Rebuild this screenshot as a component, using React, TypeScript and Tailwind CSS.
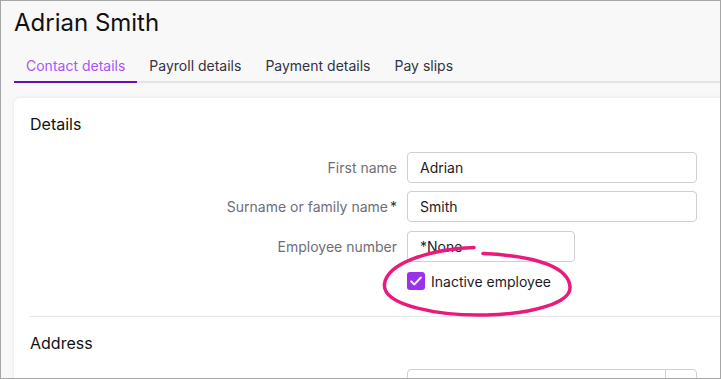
import React from "react";

const font = { fontFamily: "Inter, 'Noto Sans', sans-serif" };

function Row({ label, value, req, narrow }: { label: string; value: string; req?: boolean; narrow?: boolean }) {
  return (
    <div className="flex items-center h-[31px]">
      <div className="w-[368px] text-right text-[14px] text-[#6e6e78] pr-[1px]">
        {label}
        {req && <span className="ml-[2px] text-[#333]">*</span>}
      </div>
      <div
        className={`ml-[9px] h-[31px] ${narrow ? "w-[168px]" : "w-[290px]"} border border-[#cfcfd4] rounded-[4px] bg-white flex items-center px-[12px] text-[14px] text-[#1c1c28]`}
      >
        {value}
      </div>
    </div>
  );
}

export default function App() {
  return (
    <div
      className="relative w-[721px] h-[379px] overflow-hidden bg-[#f8f8f8] border border-[#a6a6a6]"
      style={font}
    >
      <div className="pl-[13px]">
        <h1 className="text-[24px] leading-[30px] text-[#111] pt-[7px]">Adrian Smith</h1>
        <div className="mt-[13px] flex border-b-2 border-[#e4e4e6] h-[32px]">
          <div className="px-[12px] text-[14px] text-[#a955f5] border-b-2 border-[#6a0fb5] -mb-[2px] leading-[30px]">
            Contact details
          </div>
          <div className="px-[12px] text-[14px] text-[#33333f] leading-[30px]">Payroll details</div>
          <div className="px-[12px] text-[14px] text-[#33333f] leading-[30px]">Payment details</div>
          <div className="px-[12px] text-[14px] text-[#33333f] leading-[30px]">Pay slips</div>
        </div>
        <div className="mt-[15px] mr-[-20px] bg-white rounded-[6px] shadow-[0_0_4px_rgba(0,0,0,0.08)] h-[400px] pl-[16px]">
          <div className="pt-[14px] text-[16px] leading-[24px] text-[#111]">Details</div>
          <div className="mt-[16px] flex flex-col">
            <Row label="First name" value="Adrian" />
            <div className="h-[8px]" />
            <Row label="Surname or family name" value="Smith" req />
            <div className="h-[9px]" />
            <Row label="Employee number" value="*None" narrow />
            <div className="mt-[10px] flex items-center ml-[377px] h-[18px]">
              <div className="w-[18px] h-[18px] rounded-[3px] bg-[#9b32ea] flex items-center justify-center">
                <svg width="14" height="14" viewBox="0 0 14 14" fill="none">
                  <path d="M2.2 7.4 L5.4 10.4 L11.8 3.6" stroke="white" strokeWidth="2" strokeLinecap="round" strokeLinejoin="round" />
                </svg>
              </div>
              <span className="ml-[6px] text-[14px] text-[#1c1c28]">Inactive employee</span>
            </div>
          </div>
          <div className="mt-[26px] border-t border-[#e6e6e8]" />
          <div className="pt-[14px] text-[16px] leading-[24px] text-[#111]">Address</div>
          <div className="mt-[14px] ml-[377px] w-[290px] h-[30px] border border-[#cfcfd4] rounded-t-[4px] flex justify-end">
            <div className="w-[31px] border-l border-[#cfcfd4]" />
          </div>
        </div>
      </div>
      <svg className="absolute left-0 top-0 pointer-events-none" width="721" height="379">
        <path
          d="M473,246.5 C430,248 386,262 383.5,283 C381,305 440,315 485,314 C530,313 570,302 569,286 C568,268 540,255 482,252.5"
          fill="none"
          stroke="#ea1a7c"
          strokeWidth="3.5"
          strokeLinecap="round"
        />
      </svg>
    </div>
  );
}
